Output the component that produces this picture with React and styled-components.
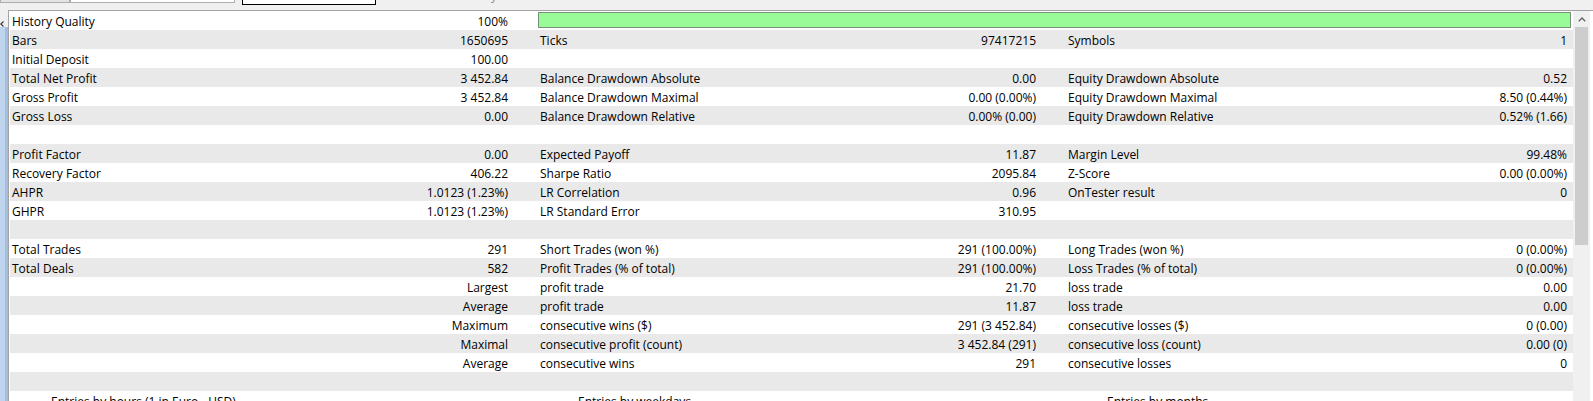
import React from 'react';
import styled, { createGlobalStyle } from 'styled-components';

const Global = createGlobalStyle`
  html, body { margin: 0; padding: 0; background: #f0f0f0; overflow: hidden; }
  body { font-family: "Open Sans", "Noto Sans", sans-serif; color: #000; }
`;

const Window = styled.div`
  width: 1593px;
  height: 401px;
  display: flex;
  flex-direction: column;
  background: #f0f0f0;
  overflow: hidden;
`;

const Toolbar = styled.div`
  height: 10px;
  flex-shrink: 0;
  display: flex;
  align-items: flex-start;
  overflow: hidden;
`;

const ToolBox = styled.div`
  box-sizing: border-box;
  width: ${p => p.$w}px;
  height: ${p => p.$h}px;
  margin-left: ${p => p.$ml || 0}px;
  background: ${p => p.$bg};
  border: 1px solid ${p => p.$bc};
  border-top: none;
`;

const ToolText = styled.div`
  margin-left: 12px;
  margin-top: -12px;
  font-size: 12px;
  line-height: 16px;
  color: #8c8c8c;
  white-space: nowrap;
`;

const Body = styled.div`
  flex: 1;
  display: flex;
  min-height: 0;
`;

const SideStrip = styled.div`
  width: 8px;
  flex-shrink: 0;
  display: flex;
  flex-direction: column;
`;

const SideArrow = styled.div`
  height: 7px;
  display: flex;
  align-items: flex-end;
  margin-top: 10px;
`;

const SideBlue = styled.div`
  flex: 1;
  background: linear-gradient(to right, #bfd4ed 0 5px, #a4bddc 5px 8px);
`;

const Panel = styled.div`
  flex: 1;
  display: flex;
  background: #fff;
  border-top: 1px solid #a3a3a3;
  border-left: 1px solid #a3a3a3;
  padding-left: 1px;
  min-height: 0;
`;

const Table = styled.div`
  width: 1563px;
  flex-shrink: 0;
  display: flex;
  flex-direction: column;
`;

const Row = styled.div`
  display: grid;
  grid-template-columns: 320px 207px 323px 206px 234px 273px;
  height: 19px;
  flex-shrink: 0;
  background: ${p => (p.$alt ? '#e9e9e9' : '#ffffff')};
  font-size: 12px;
  line-height: 16px;
  white-space: nowrap;
`;

const Label = styled.div`
  box-sizing: border-box;
  padding-left: ${p => p.$pad}px;
  padding-top: 3px;
  overflow: hidden;
`;

const Value = styled.div`
  box-sizing: border-box;
  padding-right: ${p => p.$pad}px;
  padding-top: 3px;
  text-align: right;
  overflow: hidden;
`;

const QualityBar = styled.div`
  grid-column: 3 / 7;
  box-sizing: border-box;
  margin: 1px 2px 2px 1px;
  background: #98fb98;
  border: 1px solid #76937a;
`;

const TitleRow = styled.div`
  display: grid;
  grid-template-columns: 527px 529px 507px;
  height: 19px;
  flex-shrink: 0;
  background: #fff;
  font-size: 12px;
  line-height: 16px;
  white-space: nowrap;
`;

const ChartTitle = styled.div`
  padding-left: 41px;
  padding-top: 3px;
`;

const Scrollbar = styled.div`
  width: 17px;
  flex-shrink: 0;
  background: #f0f0f0;
  display: flex;
  flex-direction: column;
`;

const ScrollArrow = styled.div`
  height: 16px;
  display: flex;
  align-items: center;
  justify-content: center;
`;

const ScrollThumb = styled.div`
  height: 218px;
  margin: 0 2px;
  background: #cdcdcd;
`;

const rows = [
  ['Bars', '1650695', 'Ticks', '97417215', 'Symbols', '1'],
  ['Initial Deposit', '100.00', '', '', '', ''],
  ['Total Net Profit', '3 452.84', 'Balance Drawdown Absolute', '0.00', 'Equity Drawdown Absolute', '0.52'],
  ['Gross Profit', '3 452.84', 'Balance Drawdown Maximal', '0.00 (0.00%)', 'Equity Drawdown Maximal', '8.50 (0.44%)'],
  ['Gross Loss', '0.00', 'Balance Drawdown Relative', '0.00% (0.00)', 'Equity Drawdown Relative', '0.52% (1.66)'],
  ['', '', '', '', '', ''],
  ['Profit Factor', '0.00', 'Expected Payoff', '11.87', 'Margin Level', '99.48%'],
  ['Recovery Factor', '406.22', 'Sharpe Ratio', '2095.84', 'Z-Score', '0.00 (0.00%)'],
  ['AHPR', '1.0123 (1.23%)', 'LR Correlation', '0.96', 'OnTester result', '0'],
  ['GHPR', '1.0123 (1.23%)', 'LR Standard Error', '310.95', '', ''],
  ['', '', '', '', '', ''],
  ['Total Trades', '291', 'Short Trades (won %)', '291 (100.00%)', 'Long Trades (won %)', '0 (0.00%)'],
  ['Total Deals', '582', 'Profit Trades (% of total)', '291 (100.00%)', 'Loss Trades (% of total)', '0 (0.00%)'],
  ['', 'Largest', 'profit trade', '21.70', 'loss trade', '0.00'],
  ['', 'Average', 'profit trade', '11.87', 'loss trade', '0.00'],
  ['', 'Maximum', 'consecutive wins ($)', '291 (3 452.84)', 'consecutive losses ($)', '0 (0.00)'],
  ['', 'Maximal', 'consecutive profit (count)', '3 452.84 (291)', 'consecutive loss (count)', '0.00 (0)'],
  ['', 'Average', 'consecutive wins', '291', 'consecutive losses', '0'],
  ['', '', '', '', '', ''],
];

export default function App() {
  return (
    <Window>
      <Global />
      <Toolbar>
        <ToolBox $w={70} $h={3} $bg="#e3e3e3" $bc="#adadad" />
        <ToolBox $w={165} $h={3} $bg="#ffffff" $bc="#adadad" />
        <ToolBox $w={134} $h={5} $ml={7} $bg="#ffffff" $bc="#000000" />
        <ToolText>Zoom 1:00 Intraday</ToolText>
      </Toolbar>
      <Body>
        <SideStrip>
          <SideArrow>
            <svg width="4" height="6" viewBox="0 0 4 6">
              <polyline points="3.5,0.5 0.8,3 3.5,5.5" fill="none" stroke="#333" strokeWidth="1.1" />
            </svg>
          </SideArrow>
          <SideBlue />
        </SideStrip>
        <Panel>
          <Table>
            <Row>
              <Label $pad={2}>History Quality</Label>
              <Value $pad={29}>100%</Value>
              <QualityBar />
            </Row>
            {rows.map((r, i) => (
              <Row key={i} $alt={i % 2 === 0}>
                <Label $pad={2}>{r[0]}</Label>
                <Value $pad={29}>{r[1]}</Value>
                <Label $pad={3}>{r[2]}</Label>
                <Value $pad={30}>{r[3]}</Value>
                <Label $pad={2}>{r[4]}</Label>
                <Value $pad={6}>{r[5]}</Value>
              </Row>
            ))}
            <TitleRow>
              <ChartTitle>Entries by hours (1 in Euro - USD)</ChartTitle>
              <ChartTitle>Entries by weekdays</ChartTitle>
              <ChartTitle>Entries by months</ChartTitle>
            </TitleRow>
          </Table>
          <Scrollbar>
            <ScrollArrow>
              <svg width="8" height="5" viewBox="0 0 8 5">
                <polyline points="0.8,4.2 4,1 7.2,4.2" fill="none" stroke="#606060" strokeWidth="1.3" />
              </svg>
            </ScrollArrow>
            <ScrollThumb />
          </Scrollbar>
        </Panel>
      </Body>
    </Window>
  );
}
